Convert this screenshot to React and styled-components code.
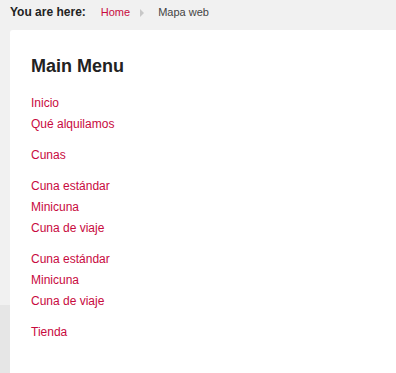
import styled, { createGlobalStyle } from "styled-components";

const GlobalStyle = createGlobalStyle`
  body {
    margin: 0;
    background: linear-gradient(to bottom, #f1f1f1 0, #f1f1f1 305px, #e6e6e6 305px);
    font-family: "Liberation Sans", Arial, sans-serif;
  }
`;

const Page = styled.div`
  width: 396px;
  height: 373px;
  overflow: hidden;
`;

const Breadcrumb = styled.div`
  display: flex;
  align-items: center;
  height: 30px;
  padding: 0 0 6px 10px;
  font-size: 11px;
  color: #444;
  box-sizing: border-box;
`;

const Label = styled.span`
  font-weight: bold;
  color: #222;
  font-size: 12px;
  margin-right: 15px;
`;

const Crumb = styled.a`
  color: ${(p) => (p.$active ? "#c80a3e" : "#444")};
  text-decoration: none;
`;

const Sep = styled.span`
  width: 0;
  height: 0;
  border-top: 4px solid transparent;
  border-bottom: 4px solid transparent;
  border-left: 4px solid #c8c8c8;
  margin: 2px 14px 0 10px;
`;

const Card = styled.div`
  margin-left: 10px;
  background: #fff;
  border-top-left-radius: 3px;
  padding: 24px 20px 40px 21px;
  min-height: 343px;
  box-sizing: border-box;
`;

const Title = styled.h3`
  margin: 0 0 15px;
  font-size: 18px;
  font-weight: bold;
  color: #222;
  line-height: 24px;
`;

const Menu = styled.ul`
  list-style: none;
  margin: 0;
  padding: 0;
`;

const Group = styled.li`
  margin-bottom: 10px;
`;

const Item = styled.a`
  display: block;
  font-size: 12px;
  line-height: 21px;
  color: #c80a3e;
  text-decoration: none;
`;

const groups = [
  ["Inicio", "Qué alquilamos"],
  ["Cunas"],
  ["Cuna estándar", "Minicuna", "Cuna de viaje"],
  ["Cuna estándar", "Minicuna", "Cuna de viaje"],
  ["Tienda"],
];

export default function App() {
  return (
    <Page>
      <GlobalStyle />
      <Breadcrumb>
        <Label>You are here:</Label>
        <Crumb href="#" $active>
          Home
        </Crumb>
        <Sep />
        <Crumb>Mapa web</Crumb>
      </Breadcrumb>
      <Card>
        <Title>Main Menu</Title>
        <Menu>
          {groups.map((g, i) => (
            <Group key={i}>
              {g.map((t, j) => (
                <Item href="#" key={j}>
                  {t}
                </Item>
              ))}
            </Group>
          ))}
        </Menu>
      </Card>
    </Page>
  );
}
